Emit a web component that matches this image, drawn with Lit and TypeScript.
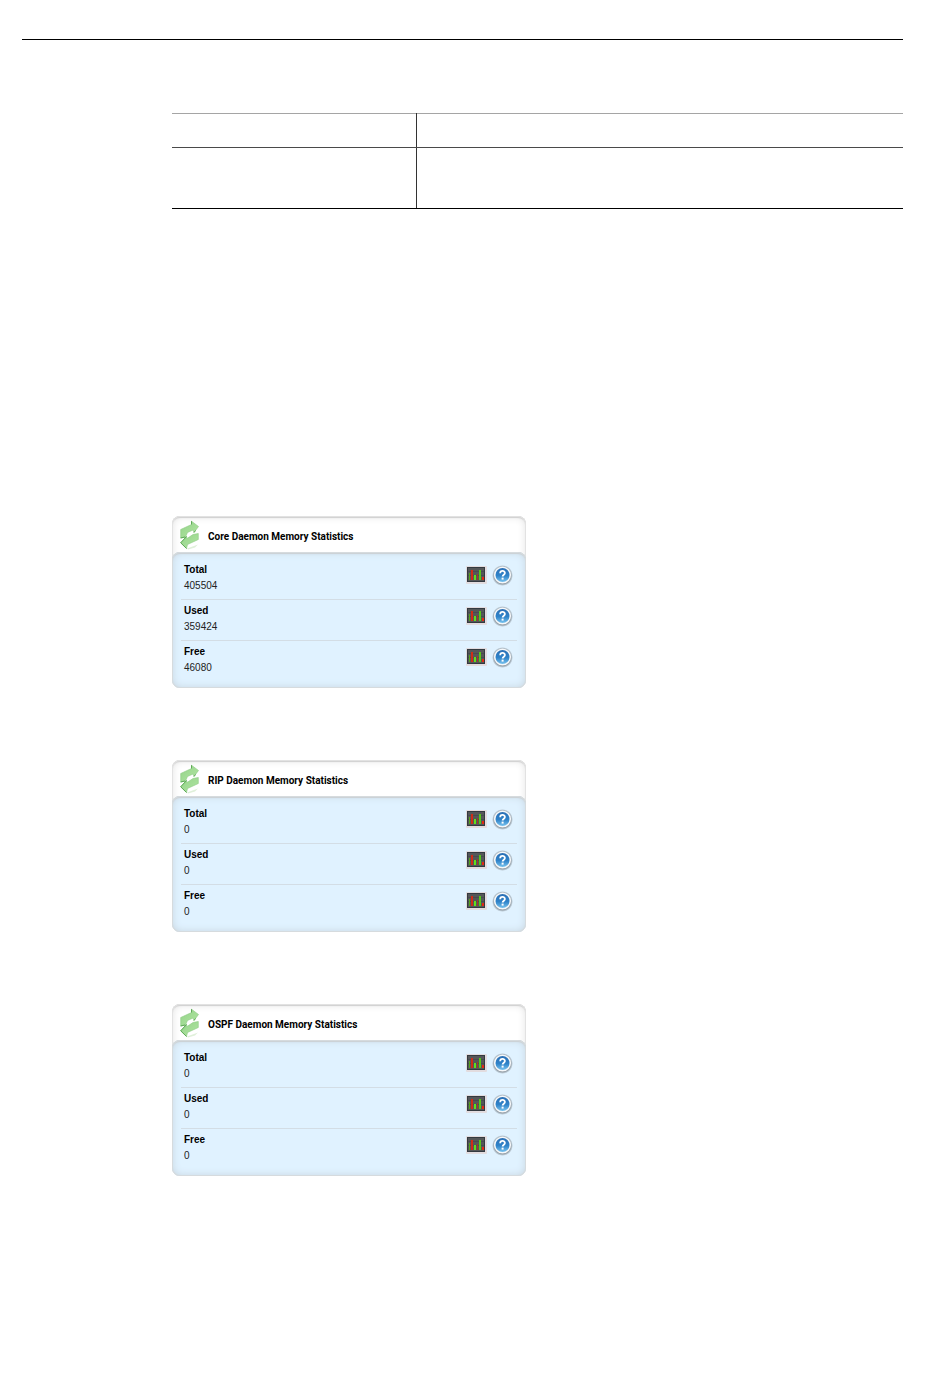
import { LitElement, html, css, svg } from "lit";
import { customElement, property } from "lit/decorators.js";

interface Stat {
  name: string;
  value: number;
}

const arrowsIcon = svg`
  <defs>
    <linearGradient id="leaf" x1="0" y1="0" x2="1" y2="1">
      <stop offset="0" stop-color="#93d388" />
      <stop offset="1" stop-color="#b2e5a3" />
    </linearGradient>
  </defs>
  <path d="M7 28.5 L18 24.5 L15 27.5 L8 29.5Z" fill="#e0f0da" />
  <path d="M.7 9.5 L11.5 4.5 L11.5 1.2 L18.5 6.5 L14 12.5 L13 10 L7.5 12.5 L5.5 17 L.7 18 Z" fill="url(#leaf)" stroke="#8cc982" stroke-width=".6" />
  <path d="M18.3 13.5 L18.3 19.5 L7.5 24.5 L6.5 28.5 L.7 22.8 L6.5 16.5 L7 18.5 L13 14.5 Z" fill="url(#leaf)" stroke="#8cc982" stroke-width=".6" />
  <path d="M11.5 1.2 L11.5 4.5 M14 12.5 L15.5 10.5 M.7 18 L5 17 M.7 22.8 L6.5 16.5 M.7 22.8 L6.5 28.5" fill="none" stroke="#55a34e" stroke-width=".9" />`;

const chartIcon = svg`
  <rect width="21" height="18" rx="1" fill="#e2dcdf" />
  <rect x="1" y="1" width="18" height="15" fill="#343a40" />
  <rect x="2" y="2" width="16" height="13" fill="#555759" />
  <path d="M2 5.5H18M2 9.5H18" stroke="#484c50" />
  <rect x="3" y="7" width="1" height="7" fill="#55a51c" />
  <rect x="5" y="4" width="2" height="10" fill="#cf2c18" />
  <rect x="8" y="9" width="2" height="5" fill="#5fe01c" />
  <rect x="11" y="8" width="1" height="6" fill="#a53d22" />
  <rect x="13" y="4" width="2" height="10" fill="#58c41c" />
  <rect x="16" y="11" width="2" height="3" fill="#e02a14" />`;

const helpIcon = svg`
  <defs>
    <linearGradient id="ball" x1="0" y1="0" x2="0" y2="1">
      <stop offset="0" stop-color="#2b6fb5" />
      <stop offset=".55" stop-color="#2f83c9" />
      <stop offset="1" stop-color="#79c3ee" />
    </linearGradient>
    <radialGradient id="halo">
      <stop offset=".78" stop-color="#8a949c" />
      <stop offset="1" stop-color="#8a949c" stop-opacity="0" />
    </radialGradient>
  </defs>
  <circle cx="10.5" cy="10.5" r="10.5" fill="url(#halo)" />
  <circle cx="10.5" cy="10" r="8.6" fill="#f6f8fa" />
  <circle cx="10.5" cy="10" r="7" fill="url(#ball)" />
  <path d="M8.2 8.3 C8.2 5.2 12.9 5.3 12.9 8 C12.9 9.7 10.6 9.7 10.6 11.6" fill="none" stroke="#fff" stroke-width="1.8" />
  <rect x="9.6" y="12.6" width="2" height="2" fill="#fff" />`;

@customElement("stat-card")
export class StatCard extends LitElement {
  @property() heading = "";
  @property({ attribute: false }) stats: Stat[] = [];

  static styles = css`
    :host {
      display: block;
      max-width: 354px;
      border-radius: 8px;
      background: #fff;
      box-shadow: inset 0 0 0 1px #e2e2e2, inset 0 2px 1px #d0d0d0, inset 0 0 8px #ddd;
    }
    .head {
      display: flex;
      align-items: center;
      gap: 8px;
      height: 36px;
      padding: 2px 8px 0;
      box-sizing: border-box;
    }
    .arrows { width: 20px; height: 30px; flex: none; }
    .title {
      margin: 0;
      padding-top: 3px;
      font-family: Roboto, "Liberation Sans", sans-serif;
      font-size: 10px;
      line-height: 16px;
      font-weight: bold;
    }
    .body {
      margin: 0;
      padding: 7px 9px 6px;
      border-radius: 8px;
      background: #e0f2ff;
      box-shadow: inset 0 0 0 1px #d6dbde, inset 0 2px 1px #cbd0d3, inset 0 0 8px #c4d1da;
    }
    .row {
      display: flex;
      align-items: flex-start;
      justify-content: space-between;
      padding: 3px 4px 5px 3px;
      border-bottom: 1px solid #d3dde5;
    }
    .row:last-child { border-bottom-color: transparent; }
    .text { font-size: 10px; line-height: 16px; }
    .name { font-weight: bold; }
    .value { color: #222; }
    .tools { display: flex; align-items: center; gap: 5px; padding-top: 3px; }
    .tool { display: block; padding: 0; border: 0; background: none; cursor: pointer; }
    .tool svg { display: block; }
  `;

  render() {
    return html`
      <div class="head">
        <svg class="arrows" viewBox="0 0 20 30" aria-hidden="true">${arrowsIcon}</svg>
        <h2 class="title">${this.heading}</h2>
      </div>
      <div class="body">
        ${this.stats.map(
          (s) => html`
            <div class="row">
              <div class="text">
                <div class="name">${s.name}</div>
                <div class="value">${s.value}</div>
              </div>
              <div class="tools">
                <button class="tool" aria-label="Graph ${s.name}">
                  <svg width="21" height="19" viewBox="0 0 21 19">${chartIcon}</svg>
                </button>
                <button class="tool" aria-label="Help on ${s.name}">
                  <svg width="21" height="21" viewBox="0 0 21 21">${helpIcon}</svg>
                </button>
              </div>
            </div>
          `
        )}
      </div>
    `;
  }
}

const stats = (total: number, used: number, free: number): Stat[] => [
  { name: "Total", value: total },
  { name: "Used", value: used },
  { name: "Free", value: free },
];

@customElement("app-root")
export class AppRoot extends LitElement {
  static styles = css`
    :host {
      display: block;
      min-height: 100vh;
      box-sizing: border-box;
      padding: 39px 47px 48px 22px;
      background: #fff;
      color: #000;
      font-family: "Liberation Sans", Arial, sans-serif;
    }
    .rule { height: 1px; margin: 0; border: 0; background: #000; }
    .content { padding: 73px 0 0 150px; }
    .grid { width: 100%; border-collapse: collapse; table-layout: fixed; }
    .grid th, .grid td { padding: 0; }
    .grid th { height: 33px; border-top: 1px solid #a5a5a5; border-bottom: 1px solid #4a4a4a; }
    .grid td { height: 60px; border-bottom: 1px solid #000; }
    .key { width: 33.4%; border-right: 1px solid #333; }
    .cards { display: grid; gap: 72px; padding-top: 307px; }
  `;

  render() {
    return html`
      <hr class="rule" />
      <main class="content">
        <table class="grid">
          <thead><tr><th class="key"></th><th></th></tr></thead>
          <tbody><tr><td class="key"></td><td></td></tr></tbody>
        </table>
        <section class="cards">
          <stat-card heading="Core Daemon Memory Statistics" .stats=${stats(405504, 359424, 46080)}></stat-card>
          <stat-card heading="RIP Daemon Memory Statistics" .stats=${stats(0, 0, 0)}></stat-card>
          <stat-card heading="OSPF Daemon Memory Statistics" .stats=${stats(0, 0, 0)}></stat-card>
        </section>
      </main>
    `;
  }
}
